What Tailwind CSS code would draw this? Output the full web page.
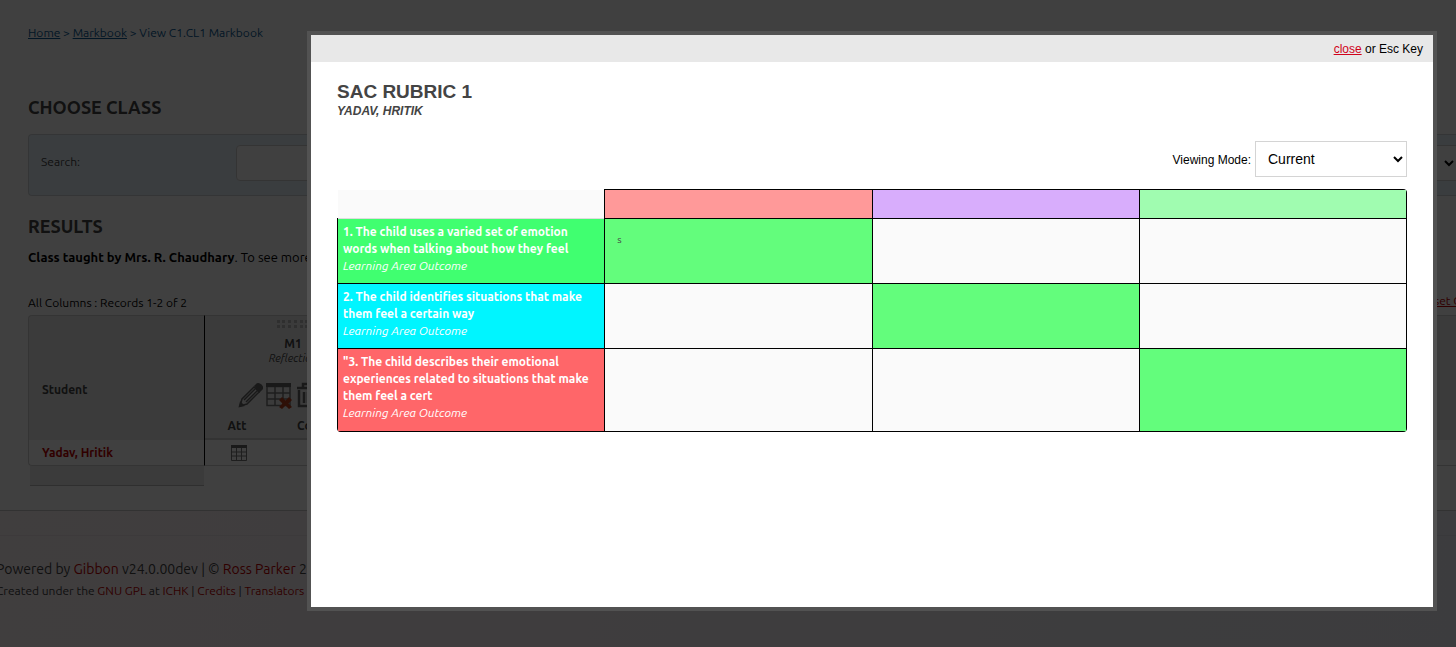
<!DOCTYPE html>
<html lang="en">
<head>
<meta charset="utf-8">
<title>View C1.CL1 Markbook</title>
<script src="https://cdn.jsdelivr.net/npm/@tailwindcss/browser@4"></script>
</head>
<body class="min-h-screen overflow-hidden bg-white font-[Ubuntu,Lato,sans-serif] text-xs text-black">

<div class="flex min-h-screen flex-col">
  <main class="h-[511px] shrink-0 overflow-hidden border-b border-[#c8c8c8] pl-7">
    <nav class="pt-6 leading-[18px] text-[#0a5a94]" aria-label="Breadcrumb">
      <a href="#" class="underline">Home</a> &gt; <a href="#" class="underline">Markbook</a> &gt; <span>View C1.CL1 Markbook</span>
    </nav>
    <h2 class="mt-[53px] text-lg leading-6 font-bold text-[#444] uppercase">Choose Class</h2>
    <form class="mt-[15px] flex h-[62px] items-start rounded-l border border-r-0 border-[#d0d4d8] bg-[#e8f3fc] pt-[10px] pl-3">
      <label for="search" class="w-[195px] shrink-0 leading-[34px] text-[#444]">Search:</label>
      <input id="search" type="text" class="h-9 w-96 rounded-sm border border-[#d0d0d0] bg-white px-3">
      <select aria-label="Class" class="-mr-0.5 ml-auto h-9 w-96 border border-[#d0d0d0] bg-white text-sm"><option></option></select>
    </form>
    <h2 class="mt-[18px] text-lg leading-6 font-bold text-[#444] uppercase">Results</h2>
    <p class="mt-[11px] text-[13px] leading-4 whitespace-nowrap"><b>Class taught by Mrs. R. Chaudhary</b>. To see more details on an item (such as comments or a grade), hover your mouse over it.</p>
    <div class="mt-6 flex h-[26px] items-start justify-between leading-6">
      <span class="pt-0.5">All Columns : Records 1-2 of 2</span>
      <a href="#" class="-mr-11 text-[#c00000] underline">Reset Columns</a>
    </div>
    <table class="w-full table-fixed border-separate border-spacing-0 text-[#444]">
      <colgroup><col class="w-[177px]"><col class="w-16"><col class="w-28"><col></colgroup>
      <thead class="bg-[#ececec]">
        <tr class="h-[98px]">
          <th rowspan="2" class="rounded-tl border-t border-r border-l border-t-[#d0d0d0] border-r-black border-l-[#d0d0d0] pt-6 pl-[13px] text-left">Student</th>
          <th colspan="2" class="border-t border-[#d0d0d0] align-top">
            <svg class="mx-auto mt-1" width="32" height="8" fill="#bbb" aria-hidden="true"><path d="M0 0h3v3H0zM5 0h3v3H5zM11 0h3v3h-3zM17 0h3v3h-3zM23 0h3v3h-3zM28 0h3v3h-3zM0 5h3v3H0zM5 5h3v3H5zM11 5h3v3h-3zM17 5h3v3h-3zM23 5h3v3h-3zM28 5h3v3h-3z"/></svg>
            <div class="mt-2 leading-4">M1</div>
            <div class="text-[11px] leading-3 font-normal italic">Reflection</div>
            <div class="mt-[17px] ml-[33px] flex gap-[3px]">
              <button type="button" aria-label="Edit"><svg width="25" height="28" viewBox="0 0 25 28" fill="none" stroke="#666" stroke-width="1.5"><path d="M2 25l2-7L16 6l5 5L9 23z"/><path d="M6 19L17 8M8 21L19 10M17 5l2-2q2-1 4 1t1 4l-3 3z" fill="#666"/><path d="M1.500 25.500l1-4 3 3z" fill="#666"/></svg></button>
              <button type="button" aria-label="Enter data"><svg width="26" height="28" viewBox="0 0 26 28" fill="none"><path d="M1 5.500h23v19H1zM1 12h23M1 18h23M9 5v20M17 5v20" stroke="#777" stroke-width="1.500"/><path d="M0 2h25v4H0z" fill="#666"/><path d="M16 16l3.500 3.500L23 16l3 3-3.500 3.500L26 26l-3 2-3.500-3.500L16 28l-3-2 3.500-3.500L13 19z" fill="#b8401c"/></svg></button>
              <button type="button" aria-label="Delete" class="pl-0.5"><svg width="22" height="28" viewBox="0 0 22 28" fill="none" stroke="#666" stroke-width="2.5"><path d="M0 7h21M6 7V3h9v4M2 9v16h17V9M7 11v11M11 11v11M15 11v11"/></svg></button>
            </div>
          </th>
          <th rowspan="2" class="border-t border-[#d0d0d0]"></th>
        </tr>
        <tr class="h-[27px]">
          <th class="border-b-2 border-[#ccc]">Att</th>
          <th class="border-b-2 border-[#ccc] pl-7 text-left">Com</th>
        </tr>
      </thead>
      <tbody>
        <tr class="h-[26px]">
          <td class="rounded-bl border-r border-b border-l border-r-black border-b-[#d0d0d0] border-l-[#d0d0d0] pl-[13px] font-bold"><a href="#" class="text-[#c00000]">Yadav, Hritik</a></td>
          <td class="border-b border-[#d0d0d0] pl-[26px]"><svg width="16" height="16" viewBox="0 0 16 16" fill="none"><path d="M.5 2.500h15v13H.5zM0 7h16M0 11h16M5.500 2v14M10.500 2v14" stroke="#777"/><path d="M0 0h16v3H0z" fill="#666"/></svg></td>
          <td class="border-b border-[#d0d0d0]"></td>
          <td class="border-b border-[#d0d0d0]"></td>
        </tr>
      </tbody>
    </table>
    <div class="ml-0.5 h-[20px] w-[174px] border-b border-[#bbb] bg-[#ececec]"></div>
  </main>

  <footer class="grow bg-linear-to-r from-[#fff5f8] to-[#f0f0f6] text-[#444]">
    <div class="mt-6 -ml-1 border-t border-black/5 pt-[22px] whitespace-nowrap">
      <p class="text-sm leading-[22px]">Powered by <a href="#" class="text-[#c00000]">Gibbon</a> v24.0.00dev | © <a href="#" class="text-[#c00000]">Ross Parker</a> 2010-2022</p>
      <p class="leading-[22px]">Created under the <a href="#" class="text-[#c00000]">GNU GPL</a> at <a href="#" class="text-[#c00000]">ICHK</a> | <a href="#" class="text-[#c00000]">Credits</a> | <a href="#" class="text-[#c00000]">Translators</a></p>
    </div>
  </footer>
</div>

<div class="fixed inset-0 flex bg-black/75 pt-[31px] pr-[19px] pb-9 pl-[307px]">
  <section role="dialog" aria-modal="true" aria-labelledby="rubric-title" class="flex grow flex-col border-4 border-[#525252] bg-white">
    <header class="h-[27px] bg-[#e8e8e8] pr-[10px] text-right font-['Liberation_Sans',Arial,sans-serif] text-xs leading-7">
      <a href="#" class="text-[#d0021b] underline">close</a> or Esc Key
    </header>
    <div class="px-[26px] pt-[18px]">
      <h1 id="rubric-title" class="font-['Liberation_Sans',Arial,sans-serif] text-[19px] leading-6 font-bold text-[#444] uppercase">SAC Rubric 1</h1>
      <p class="font-['Liberation_Sans',Arial,sans-serif] text-xs leading-[14px] font-bold text-[#444] uppercase italic">Yadav, Hritik</p>
      <div class="mt-[23px] flex items-center justify-end gap-1 font-['Liberation_Sans',Arial,sans-serif]">
        <label for="mode" class="pt-0.5 text-xs">Viewing Mode:</label>
        <select id="mode" class="h-9 w-[152px] border border-[#d4d4d4] bg-white pl-2 text-sm"><option>Current</option></select>
      </div>
      <div class="mt-3 overflow-hidden rounded">
        <table class="w-full table-fixed border-collapse text-white">
          <thead>
            <tr class="h-[29px]">
              <td class="bg-[#fafafa]"></td>
              <th class="border border-black bg-[#ff9999]"></th>
              <th class="border border-black bg-[#d8adfc]"></th>
              <th class="border border-black bg-[#a0fcb0]"></th>
            </tr>
          </thead>
          <tbody class="leading-[17px]">
            <tr class="h-[65px]">
              <th class="border border-t-[#ddd] border-r-black border-b-black border-l-black bg-[#40ff70] px-[5px] pt-1 text-left align-top">1. The child uses a varied set of emotion words when talking about how they feel<br><i class="font-normal">Learning Area Outcome</i></th>
              <td class="border border-black bg-[#63fd7c] pt-3 pl-3 align-top text-[10px] text-[#444]">s</td>
              <td class="border border-black bg-[#fafafa]"></td>
              <td class="border border-black bg-[#fafafa]"></td>
            </tr>
            <tr class="h-[65px]">
              <th class="border border-black bg-[#00f5ff] px-[5px] pt-1 text-left align-top">2. The child identifies situations that make them feel a certain way<br><i class="font-normal">Learning Area Outcome</i></th>
              <td class="border border-black bg-[#fafafa]"></td>
              <td class="border border-black bg-[#63fd7c]"></td>
              <td class="border border-black bg-[#fafafa]"></td>
            </tr>
            <tr class="h-[83px]">
              <th class="border border-black bg-[#ff6669] px-[5px] pt-1 text-left align-top">"3. The child describes their emotional experiences related to situations that make them feel a cert<br><i class="font-normal">Learning Area Outcome</i></th>
              <td class="border border-black bg-[#fafafa]"></td>
              <td class="border border-black bg-[#fafafa]"></td>
              <td class="border border-black bg-[#63fd7c]"></td>
            </tr>
          </tbody>
        </table>
      </div>
    </div>
  </section>
</div>
</body>
</html>
